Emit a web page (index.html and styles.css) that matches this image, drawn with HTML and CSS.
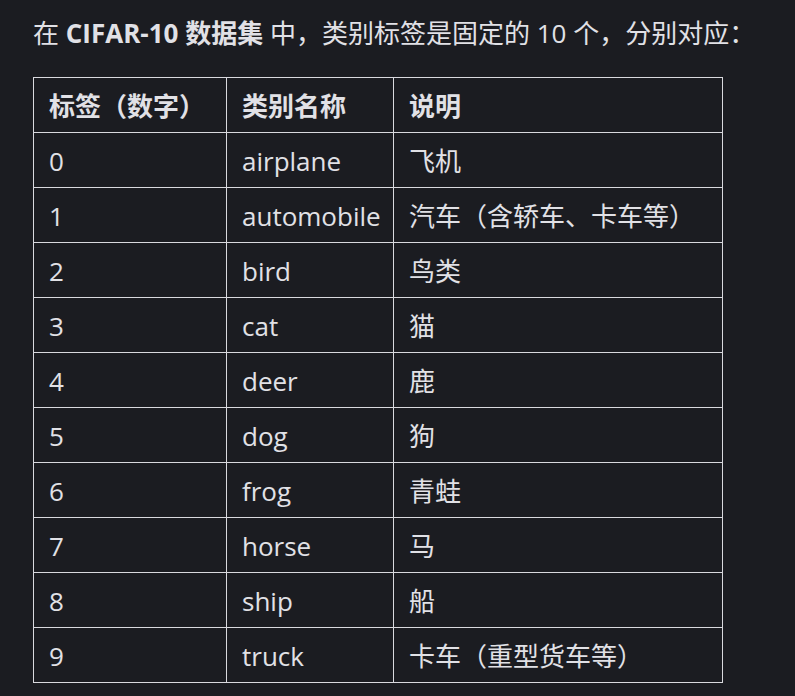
FILE: index.html
```html
<!DOCTYPE html>
<html lang="zh-CN">
<head>
<meta charset="utf-8">
<link rel="stylesheet" href="styles.css">
</head>
<body>
<div class="content">
  <p class="intro">在 <strong>CIFAR-10 数据集</strong> 中，类别标签是固定的 10 个，分别对应：</p>
  <table class="labels">
    <colgroup>
      <col class="c1"><col class="c2"><col class="c3">
    </colgroup>
    <thead>
      <tr><th>标签（数字）</th><th>类别名称</th><th>说明</th></tr>
    </thead>
    <tbody>
      <tr><td>0</td><td>airplane</td><td>飞机</td></tr>
      <tr><td>1</td><td>automobile</td><td>汽车（含轿车、卡车等）</td></tr>
      <tr><td>2</td><td>bird</td><td>鸟类</td></tr>
      <tr><td>3</td><td>cat</td><td>猫</td></tr>
      <tr><td>4</td><td>deer</td><td>鹿</td></tr>
      <tr><td>5</td><td>dog</td><td>狗</td></tr>
      <tr><td>6</td><td>frog</td><td>青蛙</td></tr>
      <tr><td>7</td><td>horse</td><td>马</td></tr>
      <tr><td>8</td><td>ship</td><td>船</td></tr>
      <tr><td>9</td><td>truck</td><td>卡车（重型货车等）</td></tr>
    </tbody>
  </table>
</div>
</body>
</html>
```

FILE: styles.css
```css
html, body {
  margin: 0;
  padding: 0;
  background: #1b1c21;
}
body {
  color: #e1e1e6;
  font-family: "Open Sans", "Noto Sans CJK SC", sans-serif;
  font-size: 26px;
  line-height: 36px;
}
.content {
  padding: 15px 0 0 33px;
}
.intro {
  margin: 0 0 26px 0;
}
.intro strong {
  font-weight: 700;
}
.labels {
  border-collapse: collapse;
  width: 689px;
  table-layout: fixed;
}
.c1 { width: 193px; }
.c2 { width: 167px; }
.c3 { width: 329px; }
.labels th,
.labels td {
  border: 1px solid #d9d9de;
  padding: 10px 15px 8px 15px;
  text-align: left;
  white-space: nowrap;
  height: 36px;
  box-sizing: content-box;
}
.labels th {
  font-weight: 700;
}
```
